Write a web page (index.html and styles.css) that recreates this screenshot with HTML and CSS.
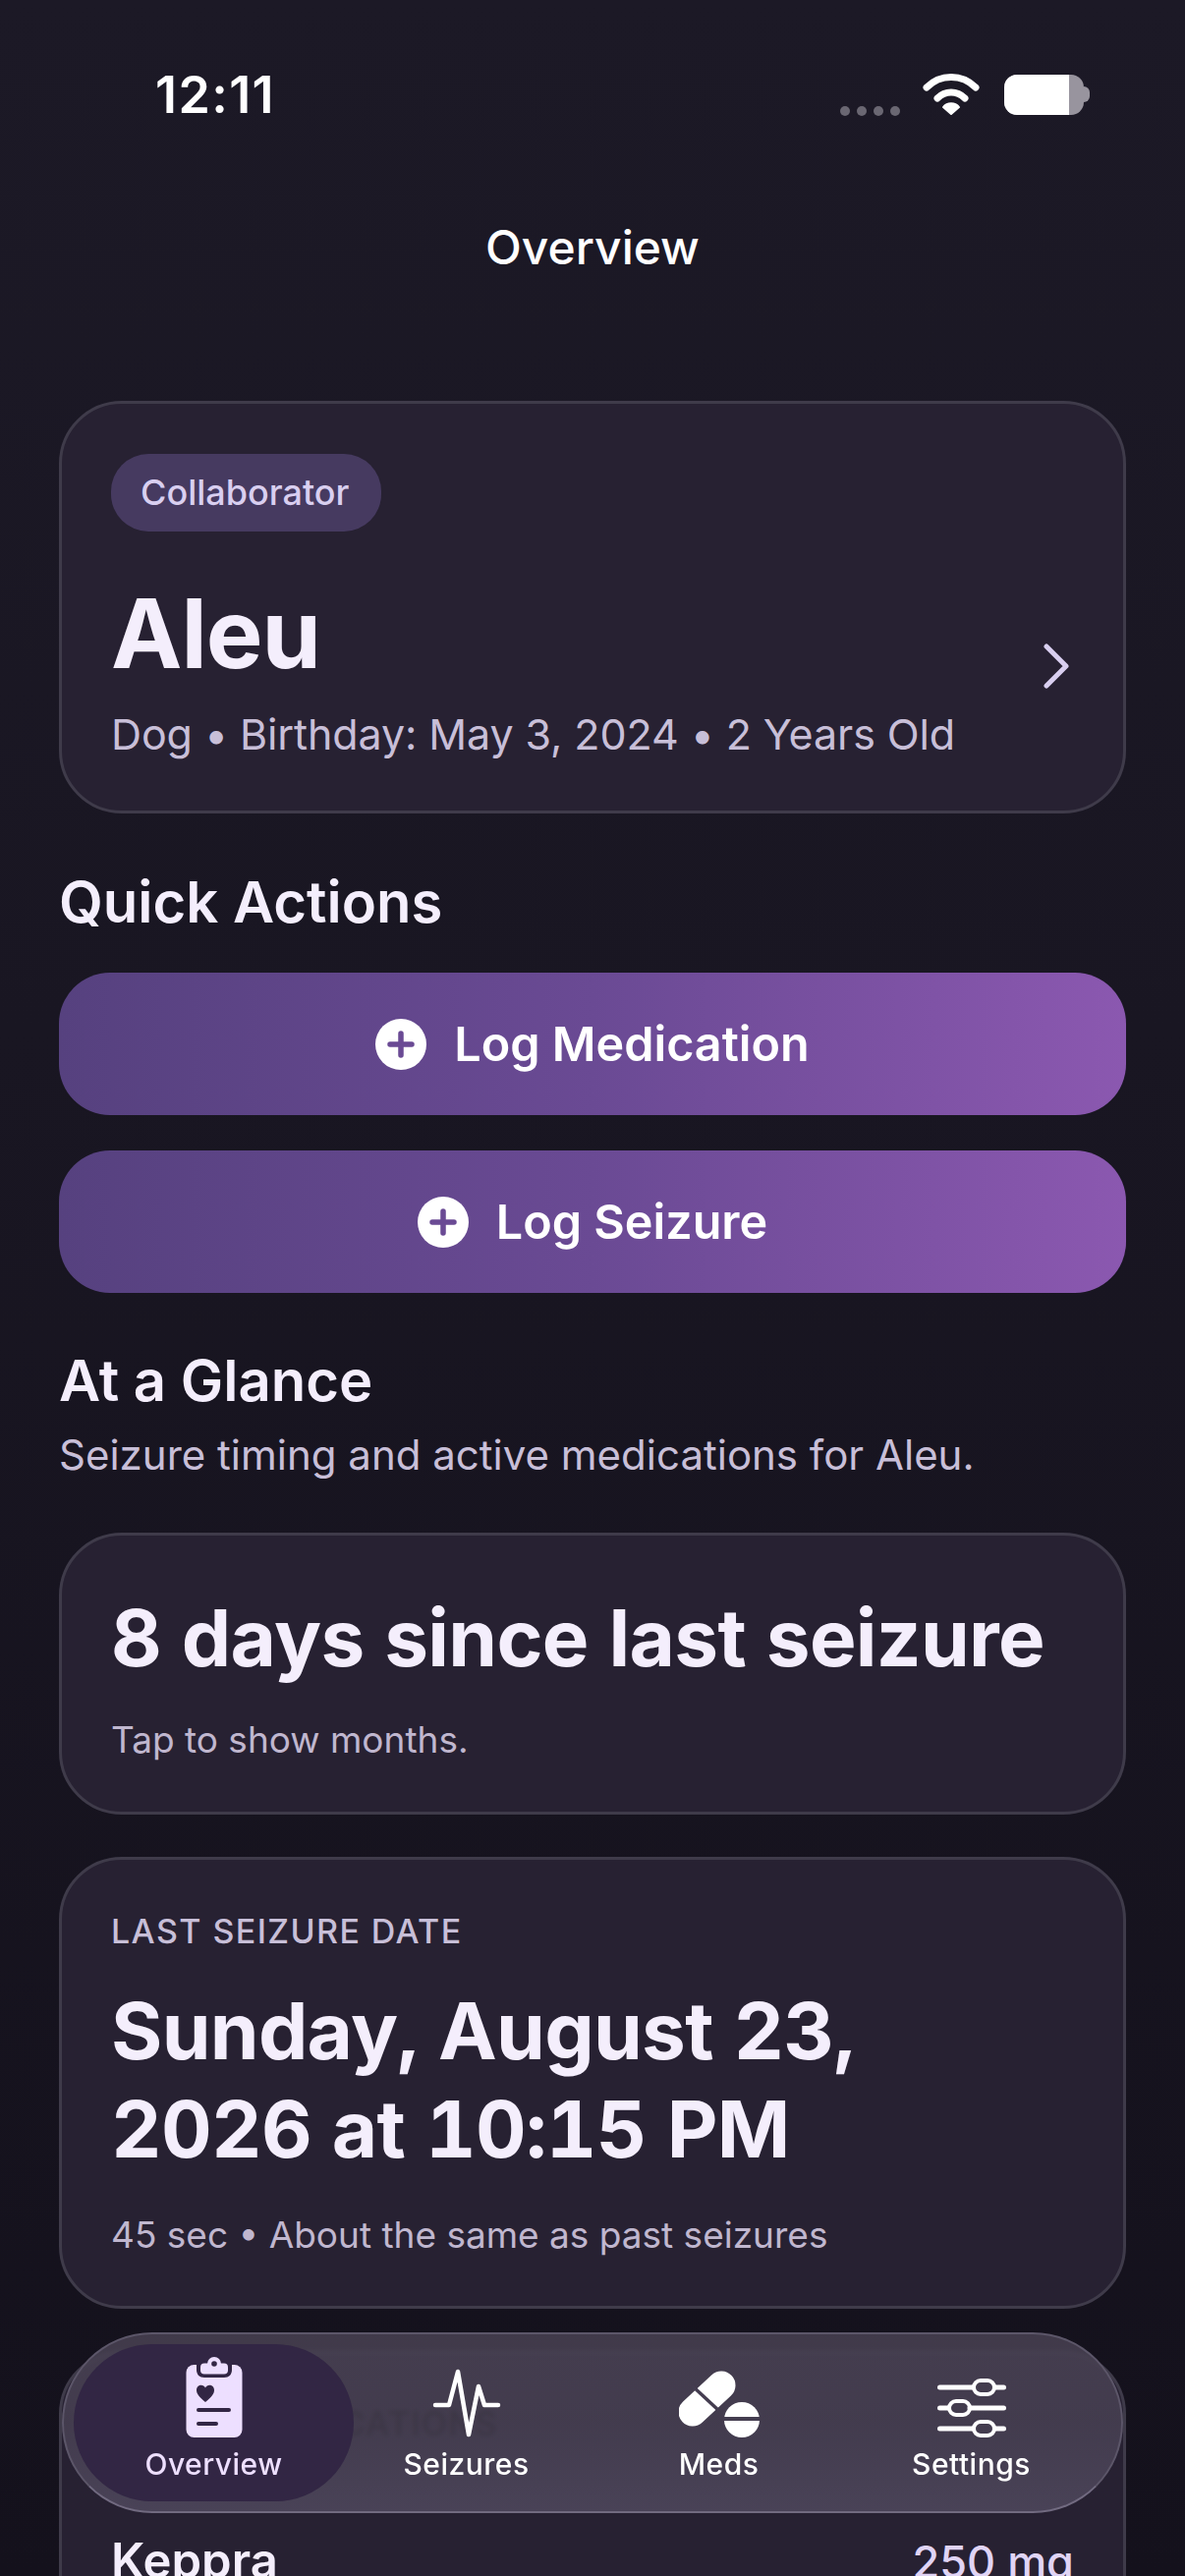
FILE: index.html
```html
<!DOCTYPE html>
<html lang="en">
<head>
  <meta charset="UTF-8">
  <meta name="viewport" content="width=device-width, initial-scale=1.0">
  <title>Overview</title>
  <link rel="stylesheet" href="styles.css">
</head>
<body>
  <div class="screen">
    <div class="status-bar">
      <span class="time">12:11</span>
      <div class="status-icons">
        <div class="signal"><i></i><i></i><i></i><i></i></div>
        <svg class="wifi" viewBox="0 0 58 44" width="58" height="44">
          <path d="M4 15 C18 1 40 1 54 15" fill="none" stroke="#fff" stroke-width="7" stroke-linecap="round"/>
          <path d="M15 26 C23 18 35 18 43 26" fill="none" stroke="#fff" stroke-width="7" stroke-linecap="round"/>
          <path d="M29 42 L21 35 C25 30 33 30 37 35 Z" fill="#fff" stroke="#fff" stroke-width="2" stroke-linejoin="round"/>
        </svg>
        <div class="battery"><div class="battery-body"><div class="battery-level"></div></div><div class="battery-cap"></div></div>
      </div>
    </div>

    <div class="nav-title">Overview</div>

    <main class="content">
      <section class="card pet-card">
        <span class="badge">Collaborator</span>
        <h1 class="pet-name">Aleu</h1>
        <p class="pet-meta">Dog • Birthday: May 3, 2024 • 2 Years Old</p>
        <svg class="chevron" viewBox="0 0 28 46" width="28" height="46">
          <path d="M4 3 L24 23 L4 43" fill="none" stroke="#d9cff0" stroke-width="5" stroke-linecap="round" stroke-linejoin="round"/>
        </svg>
      </section>

      <h2 class="section-title quick-title">Quick Actions</h2>
      <button class="action-button" type="button">
        <svg viewBox="0 0 52 52" width="52" height="52"><circle cx="26" cy="26" r="26" fill="#fff"/><path d="M26 15 V37 M15 26 H37" stroke="#6a4a94" stroke-width="5.5" stroke-linecap="round"/></svg>
        Log Medication
      </button>
      <button class="action-button" type="button">
        <svg viewBox="0 0 52 52" width="52" height="52"><circle cx="26" cy="26" r="26" fill="#fff"/><path d="M26 15 V37 M15 26 H37" stroke="#6a4a94" stroke-width="5.5" stroke-linecap="round"/></svg>
        Log Seizure
      </button>

      <h2 class="section-title glance-title">At a Glance</h2>
      <p class="section-sub">Seizure timing and active medications for Aleu.</p>

      <section class="card days-card">
        <div class="big-text">8 days since last seizure</div>
        <p class="note">Tap to show months.</p>
      </section>

      <section class="card date-card">
        <div class="label">LAST SEIZURE DATE</div>
        <div class="big-text">Sunday, August 23,<br>2026 at 10:15 PM</div>
        <p class="note">45 sec • About the same as past seizures</p>
      </section>

      <section class="card meds-card">
        <div class="label">ACTIVE MEDICATIONS</div>
        <div class="med-row"><span class="med-name">Keppra</span><span class="med-dose">250 mg</span></div>
      </section>
    </main>

    <nav class="tab-bar">
      <div class="tab active">
        <svg viewBox="0 0 58 82" width="58" height="82">
          <rect x="0.5" y="8" width="57" height="74" rx="8" fill="#eddfff"/>
          <path d="M11 8 V13 C11 18 14 21 19 21 H39 C44 21 47 18 47 13 V8" fill="#322644"/>
          <rect x="15" y="6.5" width="28" height="11" rx="4" fill="#eddfff"/>
          <circle cx="29" cy="7" r="7" fill="#eddfff"/>
          <circle cx="29" cy="7" r="2.8" fill="#322644"/>
          <path d="M20 46 C14 41 11 37.5 11 34 C11 28 18 27 20 31.5 C22 27 29 28 29 34 C29 37.5 26 41 20 46 Z" fill="#322644"/>
          <path d="M13 54 H44" stroke="#322644" stroke-width="4" stroke-linecap="round"/>
          <path d="M13 68 H31" stroke="#322644" stroke-width="4" stroke-linecap="round"/>
        </svg>
        <span>Overview</span>
      </div>
      <div class="tab">
        <svg viewBox="0 0 70 70" width="70" height="70">
          <path d="M3 37 H17 L26 3 L37 67 L47 18 L53 37 H67" fill="none" stroke="#fff" stroke-width="4.5" stroke-linecap="round" stroke-linejoin="round"/>
        </svg>
        <span>Seizures</span>
      </div>
      <div class="tab">
        <svg viewBox="0 0 82 70" width="82" height="70">
          <path d="M14 44 L43 17" fill="none" stroke="#fff" stroke-width="29" stroke-linecap="round"/>
          <path d="M13 17 L41 43" fill="none" stroke="#443d50" stroke-width="3.5"/>
          <circle cx="64" cy="52" r="18" fill="#fff"/>
          <path d="M45 51 H83" stroke="#443d50" stroke-width="4"/>
        </svg>
        <span>Meds</span>
      </div>
      <div class="tab">
        <svg viewBox="0 0 70 60" width="70" height="60">
          <g fill="none" stroke="#fff" stroke-width="5" stroke-linecap="round">
            <path d="M2.5 9 H36 M59 9 H67.5"/>
            <path d="M2.5 30 H11 M33 30 H67.5"/>
            <path d="M2.5 51 H36 M59 51 H67.5"/>
          </g>
          <g fill="none" stroke="#fff" stroke-width="4">
            <rect x="37" y="2" width="21" height="14" rx="7"/>
            <rect x="12" y="23" width="21" height="14" rx="7"/>
            <rect x="37" y="44" width="21" height="14" rx="7"/>
          </g>
        </svg>
        <span>Settings</span>
      </div>
    </nav>
  </div>
</body>
</html>
```

FILE: styles.css
```css
* {
  box-sizing: border-box;
  margin: 0;
  padding: 0;
}

html, body {
  overflow: hidden;
}

body {
  width: 1206px;
  height: 2622px;
  background-color: #1a1723;
  font-family: "Inter", "Liberation Sans", sans-serif;
}

.screen {
  position: relative;
  width: 1206px;
  height: 2622px;
  overflow: hidden;
  background: linear-gradient(180deg, #1c1926 0%, #191622 40%, #14111c 100%);
}

.status-bar {
  display: flex;
  justify-content: space-between;
  align-items: center;
  height: 192px;
  padding: 0 97px 0 158px;
}

.time {
  color: #fff;
  font-size: 52px;
  font-weight: 600;
  letter-spacing: 1.4px;
}

.status-icons {
  display: flex;
  align-items: center;
  gap: 23px;
}

.signal {
  display: flex;
  gap: 7px;
  margin-top: 34px;
}

.signal i {
  display: block;
  width: 10px;
  height: 10px;
  border-radius: 50%;
  background-color: #6a6772;
}

.battery {
  display: flex;
  align-items: center;
  gap: 0;
  margin-left: 2px;
}

.battery-body {
  width: 81px;
  height: 41px;
  border-radius: 13px;
  background-color: #98949e;
  overflow: hidden;
}

.battery-level {
  width: 66px;
  height: 41px;
  background-color: #fff;
}

.battery-cap {
  width: 6px;
  height: 16px;
  border-radius: 0 8px 8px 0;
  background-color: #98949e;
}

.nav-title {
  color: #fff;
  text-align: center;
  font-size: 48px;
  font-weight: 500;
  line-height: 60px;
  height: 186px;
  margin-top: 30px;
}

.content {
  padding: 0 60px;
}

.card {
  position: relative;
  border: 3px solid #3f3b4a;
  border-radius: 64px;
  background-color: #272132;
  padding: 0 50px;
  margin-bottom: 43px;
}

.pet-card {
  height: 420px;
  padding-top: 51px;
  margin-bottom: 0;
}

.badge {
  display: inline-block;
  height: 79px;
  line-height: 79px;
  padding: 0 32px 0 30px;
  border-radius: 38px;
  background-color: #463a60;
  color: #d9cff0;
  font-size: 36px;
  font-weight: 500;
}

.pet-name {
  color: #f4eefc;
  font-size: 97px;
  font-weight: 700;
  letter-spacing: -1px;
  line-height: 120px;
  margin-top: 44px;
}

.pet-meta {
  color: #c8bfd8;
  font-size: 43px;
  letter-spacing: -0.1px;
  line-height: 56px;
  margin-top: 14px;
}

.chevron {
  position: absolute;
  right: 54px;
  top: 244px;
}

.section-title {
  color: #f4eefc;
  font-size: 58px;
  font-weight: 600;
  line-height: 68px;
}

.quick-title {
  margin-top: 56px;
  margin-bottom: 38px;
}

.action-button {
  display: flex;
  align-items: center;
  justify-content: center;
  gap: 28px;
  width: 100%;
  height: 145px;
  margin-bottom: 36px;
  border: none;
  border-radius: 52px;
  background: linear-gradient(90deg, #56417f 0%, #6a4a94 50%, #8b58b0 100%);
  color: #fff;
  font-family: inherit;
  font-size: 48.5px;
  font-weight: 600;
}

.glance-title {
  margin-top: 55px;
}

.section-sub {
  color: #c8bfd8;
  font-size: 42px;
  line-height: 56px;
  margin-top: 14px;
  margin-bottom: 51px;
}

.days-card {
  height: 287px;
  padding-top: 54px;
}

.big-text {
  color: #f4eefc;
  font-size: 80px;
  font-weight: 700;
  font-variant-numeric: tabular-nums;
  letter-spacing: -0.7px;
  line-height: 100px;
}

.note {
  color: #c0b7cf;
  font-size: 37px;
  line-height: 46px;
  margin-top: 31px;
}

.date-card {
  height: 460px;
  padding-top: 52px;
}

.date-card .big-text {
  margin-top: 30px;
}

.date-card .note {
  margin-top: 35px;
}

.label {
  color: #c8bfd8;
  font-size: 34px;
  font-weight: 500;
  letter-spacing: 1.4px;
  line-height: 42px;
}

.meds-card {
  height: 400px;
  padding-top: 50px;
}

/* only ever seen through the tab bar glass, where it reads darker */
.meds-card .label {
  color: #000;
}

.med-row {
  display: flex;
  justify-content: space-between;
  align-items: baseline;
  margin-top: 89px;
}

.med-name {
  color: #f4eefc;
  font-size: 49px;
  font-weight: 600;
}

.med-dose {
  color: #e0d4f5;
  font-size: 45px;
  font-weight: 500;
}

.tab-bar {
  position: absolute;
  left: 63px;
  top: 2374px;
  width: 1080px;
  height: 184px;
  display: grid;
  grid-template-columns: repeat(4, 257px);
  align-items: center;
  padding: 0 24px;
  border: 2px solid #5c5669;
  border-bottom-color: #716a80;
  border-radius: 92px;
  background: linear-gradient(180deg, rgba(74, 67, 84, 0.84) 0%, rgba(72, 65, 83, 0.84) 50%, rgba(80, 73, 94, 0.84) 100%);
  backdrop-filter: blur(2px);
}

.tab {
  display: flex;
  flex-direction: column;
  align-items: center;
  justify-content: flex-end;
  gap: 9px;
  height: 160px;
  padding-bottom: 20px;
  color: #fff;
  font-size: 30px;
  font-weight: 500;
  letter-spacing: 0.5px;
}

.tab svg {
  flex: none;
}

.tab.active {
  margin: 0 -14px;
  border-radius: 80px;
  background-color: #322644;
  color: #eddfff;
}
```
